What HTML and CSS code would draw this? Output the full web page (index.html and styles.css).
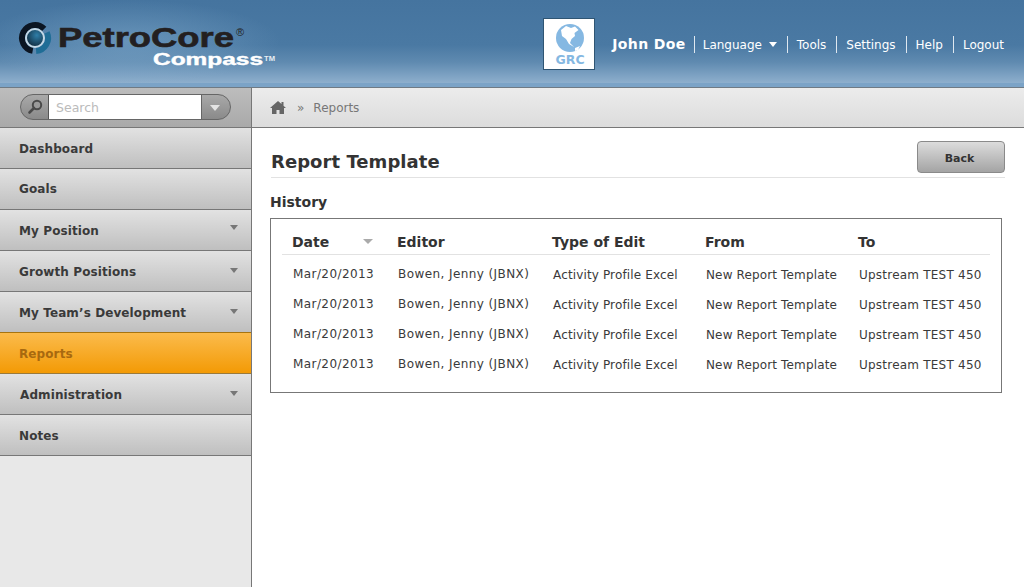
FILE: index.html
```html
<!DOCTYPE html>
<html lang="en">
<head>
    <meta charset="UTF-8">
    <meta name="viewport" content="width=device-width, initial-scale=1.0">
    <title>PetroCore Compass - Report Template</title>
    <link rel="stylesheet" href="styles.css">
</head>
<body>

    <header class="topbar">
        <svg class="logo" width="290" height="87" viewBox="0 0 290 87">
            <defs>
                <radialGradient id="core" cx="0.6" cy="0.35" r="0.75">
                    <stop offset="0" stop-color="#2f7ea8"/>
                    <stop offset="1" stop-color="#0d2233"/>
                </radialGradient>
            </defs>
            <path d="M44.2 28.8 A13 13 0 1 0 32.7 50.8" fill="none" stroke="#0b1522" stroke-width="6"/>
            <path d="M46.8 32.5 A13 13 0 0 1 36.1 51" fill="none" stroke="#1f6d96" stroke-width="6"/>
            <circle cx="35" cy="38" r="9" fill="url(#core)" stroke="#c3d8e6" stroke-width="2"/>
            <text class="logo-name" x="58" y="47" textLength="176" lengthAdjust="spacingAndGlyphs">PetroCore</text>
            <text class="logo-reg" x="236" y="36">®</text>
            <text class="logo-sub" x="153" y="65" textLength="110" lengthAdjust="spacingAndGlyphs">Compass</text>
            <text class="logo-tm" x="264" y="61" textLength="11" lengthAdjust="spacingAndGlyphs">TM</text>
        </svg>
        <div class="topbar-right">
            <div class="grc">
                <svg width="30" height="30" viewBox="0 0 30 30">
                    <circle cx="15" cy="15" r="14" fill="#85b8e2"/>
                    <path d="M6 7 L11 3 L16 5 L20 3.5 L23.5 7 L19.5 10 L20 13 L16.5 16 L15 20 L19 24 L14 21 L11 16 L7 13 Z" fill="#fff"/>
                    <path d="M20 25 L25 23 L23 27 L20 28 Z" fill="#fff"/>
                </svg>
                <span class="grc-label">GRC</span>
            </div>
            <nav class="usernav">
                <span class="username">John Doe</span>
                <a class="usernav-link lang">Language <i class="caret-white"></i></a>
                <a class="usernav-link">Tools</a>
                <a class="usernav-link">Settings</a>
                <a class="usernav-link">Help</a>
                <a class="usernav-link">Logout</a>
            </nav>
        </div>
    </header>

    <div class="layout">
        <aside class="sidebar">
            <div class="search-strip">
                <div class="search">
                    <span class="search-icon">
                        <svg width="18" height="18" viewBox="0 0 18 18">
                            <circle cx="11" cy="7" r="4.2" fill="#9a9a9a" stroke="#4a4a4a" stroke-width="2"/>
                            <path d="M8 10 L3.5 14.5" stroke="#4a4a4a" stroke-width="2.6" stroke-linecap="round"/>
                        </svg>
                    </span>
                    <span class="search-input">Search</span>
                    <span class="search-drop"><i class="caret-drop"></i></span>
                </div>
            </div>
            <ul class="menu">
                <li class="menu-item">Dashboard</li>
                <li class="menu-item goals">Goals</li>
                <li class="menu-item">My Position <i class="caret-menu"></i></li>
                <li class="menu-item">Growth Positions <i class="caret-menu low"></i></li>
                <li class="menu-item">My Team’s Development <i class="caret-menu low"></i></li>
                <li class="menu-item active">Reports</li>
                <li class="menu-item admin">Administration <i class="caret-menu low"></i></li>
                <li class="menu-item">Notes</li>
            </ul>
        </aside>

        <main class="main">
            <div class="breadcrumb">
                <svg width="16" height="13" viewBox="0 0 16 13">
                    <path d="M8 0 L11.5 3 V1 H13.5 V4.8 L16 7 H14 V13 H9.5 V9 H6.5 V13 H2 V7 H0 Z" fill="#666"/>
                </svg>
                <span class="crumb-sep">»</span>
                <span>Reports</span>
            </div>
            <div class="content">
                <div class="title-row">
                    <h1>Report Template</h1>
                    <button class="back-btn">Back</button>
                </div>
                <h2>History</h2>
                <div class="history-box">
                    <table class="history">
                        <thead>
                            <tr>
                                <th class="col-date">Date <i class="caret-sort"></i></th>
                                <th class="col-editor">Editor</th>
                                <th class="col-type">Type of Edit</th>
                                <th class="col-from">From</th>
                                <th>To</th>
                            </tr>
                        </thead>
                        <tbody>
                            <tr>
                                <td class="up wide">Mar/20/2013</td>
                                <td class="up wide">Bowen, Jenny (JBNX)</td>
                                <td class="tight">Activity Profile Excel</td>
                                <td class="tight">New Report Template</td>
                                <td class="mid">Upstream TEST 450</td>
                            </tr>
                            <tr>
                                <td class="up wide">Mar/20/2013</td>
                                <td class="up wide">Bowen, Jenny (JBNX)</td>
                                <td class="tight">Activity Profile Excel</td>
                                <td class="tight">New Report Template</td>
                                <td class="mid">Upstream TEST 450</td>
                            </tr>
                            <tr>
                                <td class="up wide">Mar/20/2013</td>
                                <td class="up wide">Bowen, Jenny (JBNX)</td>
                                <td class="tight">Activity Profile Excel</td>
                                <td class="tight">New Report Template</td>
                                <td class="mid">Upstream TEST 450</td>
                            </tr>
                            <tr>
                                <td class="up wide">Mar/20/2013</td>
                                <td class="up wide">Bowen, Jenny (JBNX)</td>
                                <td class="tight">Activity Profile Excel</td>
                                <td class="tight">New Report Template</td>
                                <td class="mid">Upstream TEST 450</td>
                            </tr>
                        </tbody>
                    </table>
                </div>
            </div>
        </main>
    </div>

</body>
</html>
```

FILE: styles.css
```css
* {
    box-sizing: border-box;
}
html, body {
    height: 100%;
}
body {
    margin: 0;
    font-family: "DejaVu Sans", Verdana, sans-serif;
    font-size: 12px;
    color: #333;
    background: #fff;
    overflow: hidden;
    display: flex;
    flex-direction: column;
}

/* top bar */
.topbar {
    height: 88px;
    flex: none;
    display: flex;
    justify-content: space-between;
    border-bottom: 1px solid #6f7a84;
    background:
        radial-gradient(ellipse 150px 42px at 130px 42px, rgba(150, 190, 220, 0.4), rgba(150, 190, 220, 0)),
        linear-gradient(to bottom, #7ba3c7 0, #7ba3c7 4px, transparent 4px) bottom / 100% 4px no-repeat,
        linear-gradient(to bottom, #45749f 0, #4a79a3 45px, #5f8ab0 62px, #8eafcd 83px);
}
.logo {
    flex: none;
    display: block;
}
.logo-name {
    font-family: "Liberation Sans", Arial, sans-serif;
    font-weight: bold;
    font-size: 27px;
    fill: #231f20;
    stroke: #231f20;
    stroke-width: 0.6px;
}
.logo-reg {
    font-family: "Liberation Sans", Arial, sans-serif;
    font-size: 11px;
    fill: #222;
}
.logo-sub {
    font-family: "Liberation Sans", Arial, sans-serif;
    font-weight: bold;
    font-size: 16px;
    fill: #fff;
    stroke: #fff;
    stroke-width: 0.4px;
}
.logo-tm {
    font-family: "Liberation Sans", Arial, sans-serif;
    font-weight: bold;
    font-size: 7px;
    fill: #e8eef4;
}
.topbar-right {
    display: flex;
    align-items: flex-start;
    padding-top: 18px;
    padding-right: 10px;
}
.grc {
    width: 52px;
    height: 52px;
    background: #fff;
    border: 1px solid #2f5573;
    display: flex;
    flex-direction: column;
    align-items: center;
    padding: 4px 0 0 2px;
    margin-right: 17px;
}
.grc-label {
    font-weight: bold;
    font-size: 12.5px;
    line-height: 14px;
    color: #85b8e2;
}
.usernav {
    display: flex;
    align-items: flex-start;
    height: 17px;
    margin-top: 18px;
    color: #fff;
}
.username {
    font-weight: bold;
    font-size: 14px;
    line-height: 16px;
    letter-spacing: 0.4px;
    padding-right: 8px;
}
.usernav-link {
    height: 17px;
    line-height: 19px;
    padding: 0 10px 0 9px;
    border-left: 1px solid #dfe8f0;
}
.usernav-link.lang {
    padding-left: 8px;
}
.caret-white {
    display: inline-block;
    width: 0;
    height: 0;
    margin: 0 0 2px 3px;
    border-left: 4px solid transparent;
    border-right: 4px solid transparent;
    border-top: 5px solid #fff;
}

/* page under the top bar */
.layout {
    flex: 1;
    display: flex;
    min-height: 0;
}
.sidebar {
    width: 252px;
    flex: none;
    background: #e8e8e8;
    border-right: 1px solid #777;
}
.search-strip {
    height: 40px;
    padding: 6px 20px 0;
    background: linear-gradient(to bottom, #bdbdbd, #a9a9a9);
    border-bottom: 1px solid #777;
}
.search {
    width: 211px;
    height: 26px;
    display: flex;
    border: 1px solid #666;
    border-radius: 13px;
    overflow: hidden;
    background: linear-gradient(to bottom, #a9a9a9, #8a8a8a);
}
.search-icon {
    width: 27px;
    flex: none;
    padding: 3px 0 0 5px;
}
.search-input {
    flex: 1;
    background: #fff;
    color: #bbb;
    font-size: 12.5px;
    line-height: 26px;
    padding-left: 7px;
    border-left: 1px solid #555;
}
.search-drop {
    width: 29px;
    flex: none;
    padding: 10px 0 0 8px;
    border-left: 1px solid #666;
}
.caret-drop {
    display: block;
    width: 0;
    height: 0;
    border-left: 5px solid transparent;
    border-right: 5px solid transparent;
    border-top: 6px solid #e4e4e4;
}
.menu {
    list-style: none;
    margin: 0;
    padding: 0;
}
.menu-item {
    position: relative;
    height: 41px;
    line-height: 42px;
    padding-left: 19px;
    font-weight: bold;
    letter-spacing: 0.1px;
    color: #3a3a3a;
    background: linear-gradient(to bottom, #e2e2e2, #bfbfbf);
    border-bottom: 1px solid #777;
}
.menu-item.goals {
    line-height: 40px;
}
.menu-item.admin {
    padding-left: 20px;
}
.menu-item.active {
    color: #a8690f;
    background: linear-gradient(to bottom, #fbbb4c, #f39a05);
    border-top: 1px solid #a8740f;
    margin-top: -1px;
    height: 42px;
    border-bottom-color: #9a7a3a;
}
.caret-menu {
    position: absolute;
    right: 13px;
    top: 15px;
    width: 0;
    height: 0;
    border-left: 4px solid transparent;
    border-right: 4px solid transparent;
    border-top: 5px solid #777;
}
.caret-menu.low {
    top: 17px;
}

/* main column */
.main {
    flex: 1;
    min-width: 0;
}
.breadcrumb {
    height: 40px;
    display: flex;
    align-items: center;
    padding-left: 18px;
    color: #777;
    background: linear-gradient(to bottom, #ececec, #dcdcdc);
    border-bottom: 1px solid #777;
}
.crumb-sep {
    margin: 0 9px 0 11px;
}
.content {
    padding: 13px 19px 0 18px;
}
.title-row {
    display: flex;
    justify-content: space-between;
    align-items: flex-start;
    height: 37px;
    margin-left: 1px;
    border-bottom: 1px solid #e2e2e2;
}
h1 {
    margin: 8px 0 0;
    font-size: 18px;
    line-height: 26px;
    letter-spacing: 0.05px;
    color: #333;
}
.back-btn {
    width: 88px;
    height: 32px;
    padding: 2px 3px 0 0;
    font: bold 11px "DejaVu Sans", Verdana, sans-serif;
    color: #333;
    border: 1px solid #8a8a8a;
    border-radius: 4px;
    background: linear-gradient(to bottom, #dcdcdc, #a4a4a4);
}
h2 {
    margin: 15px 0 7px;
    font-size: 14px;
    line-height: 18px;
    color: #333;
}
.history-box {
    width: 732px;
    height: 175px;
    padding: 13px 11px 0;
    border: 1px solid #777;
}
.history {
    width: 708px;
    table-layout: fixed;
    border-collapse: collapse;
}
.history th {
    height: 22px;
    padding: 0 0 1px 10px;
    text-align: left;
    font-size: 14px;
    border-bottom: 1px solid #e2e2e2;
    color: #333;
}
.col-date { width: 105px; position: relative; }
.col-editor { width: 155px; }
.col-type { width: 153px; }
.col-from { width: 153px; }
.history td {
    height: 30px;
    padding: 0 0 0 11px;
    font-size: 12px;
    color: #3a3a3a;
    white-space: nowrap;
}
.history tbody tr:first-child td {
    height: 36px;
    padding-top: 6px;
}
.history td.up {
    padding-bottom: 2px;
}
.history td.wide {
    letter-spacing: 0.42px;
}
.history td.tight {
    letter-spacing: 0.14px;
}
.history td.mid {
    letter-spacing: 0.22px;
}
.caret-sort {
    position: absolute;
    left: 81px;
    top: 7px;
    width: 0;
    height: 0;
    border-left: 5px solid transparent;
    border-right: 5px solid transparent;
    border-top: 5px solid #aaa;
}
```
